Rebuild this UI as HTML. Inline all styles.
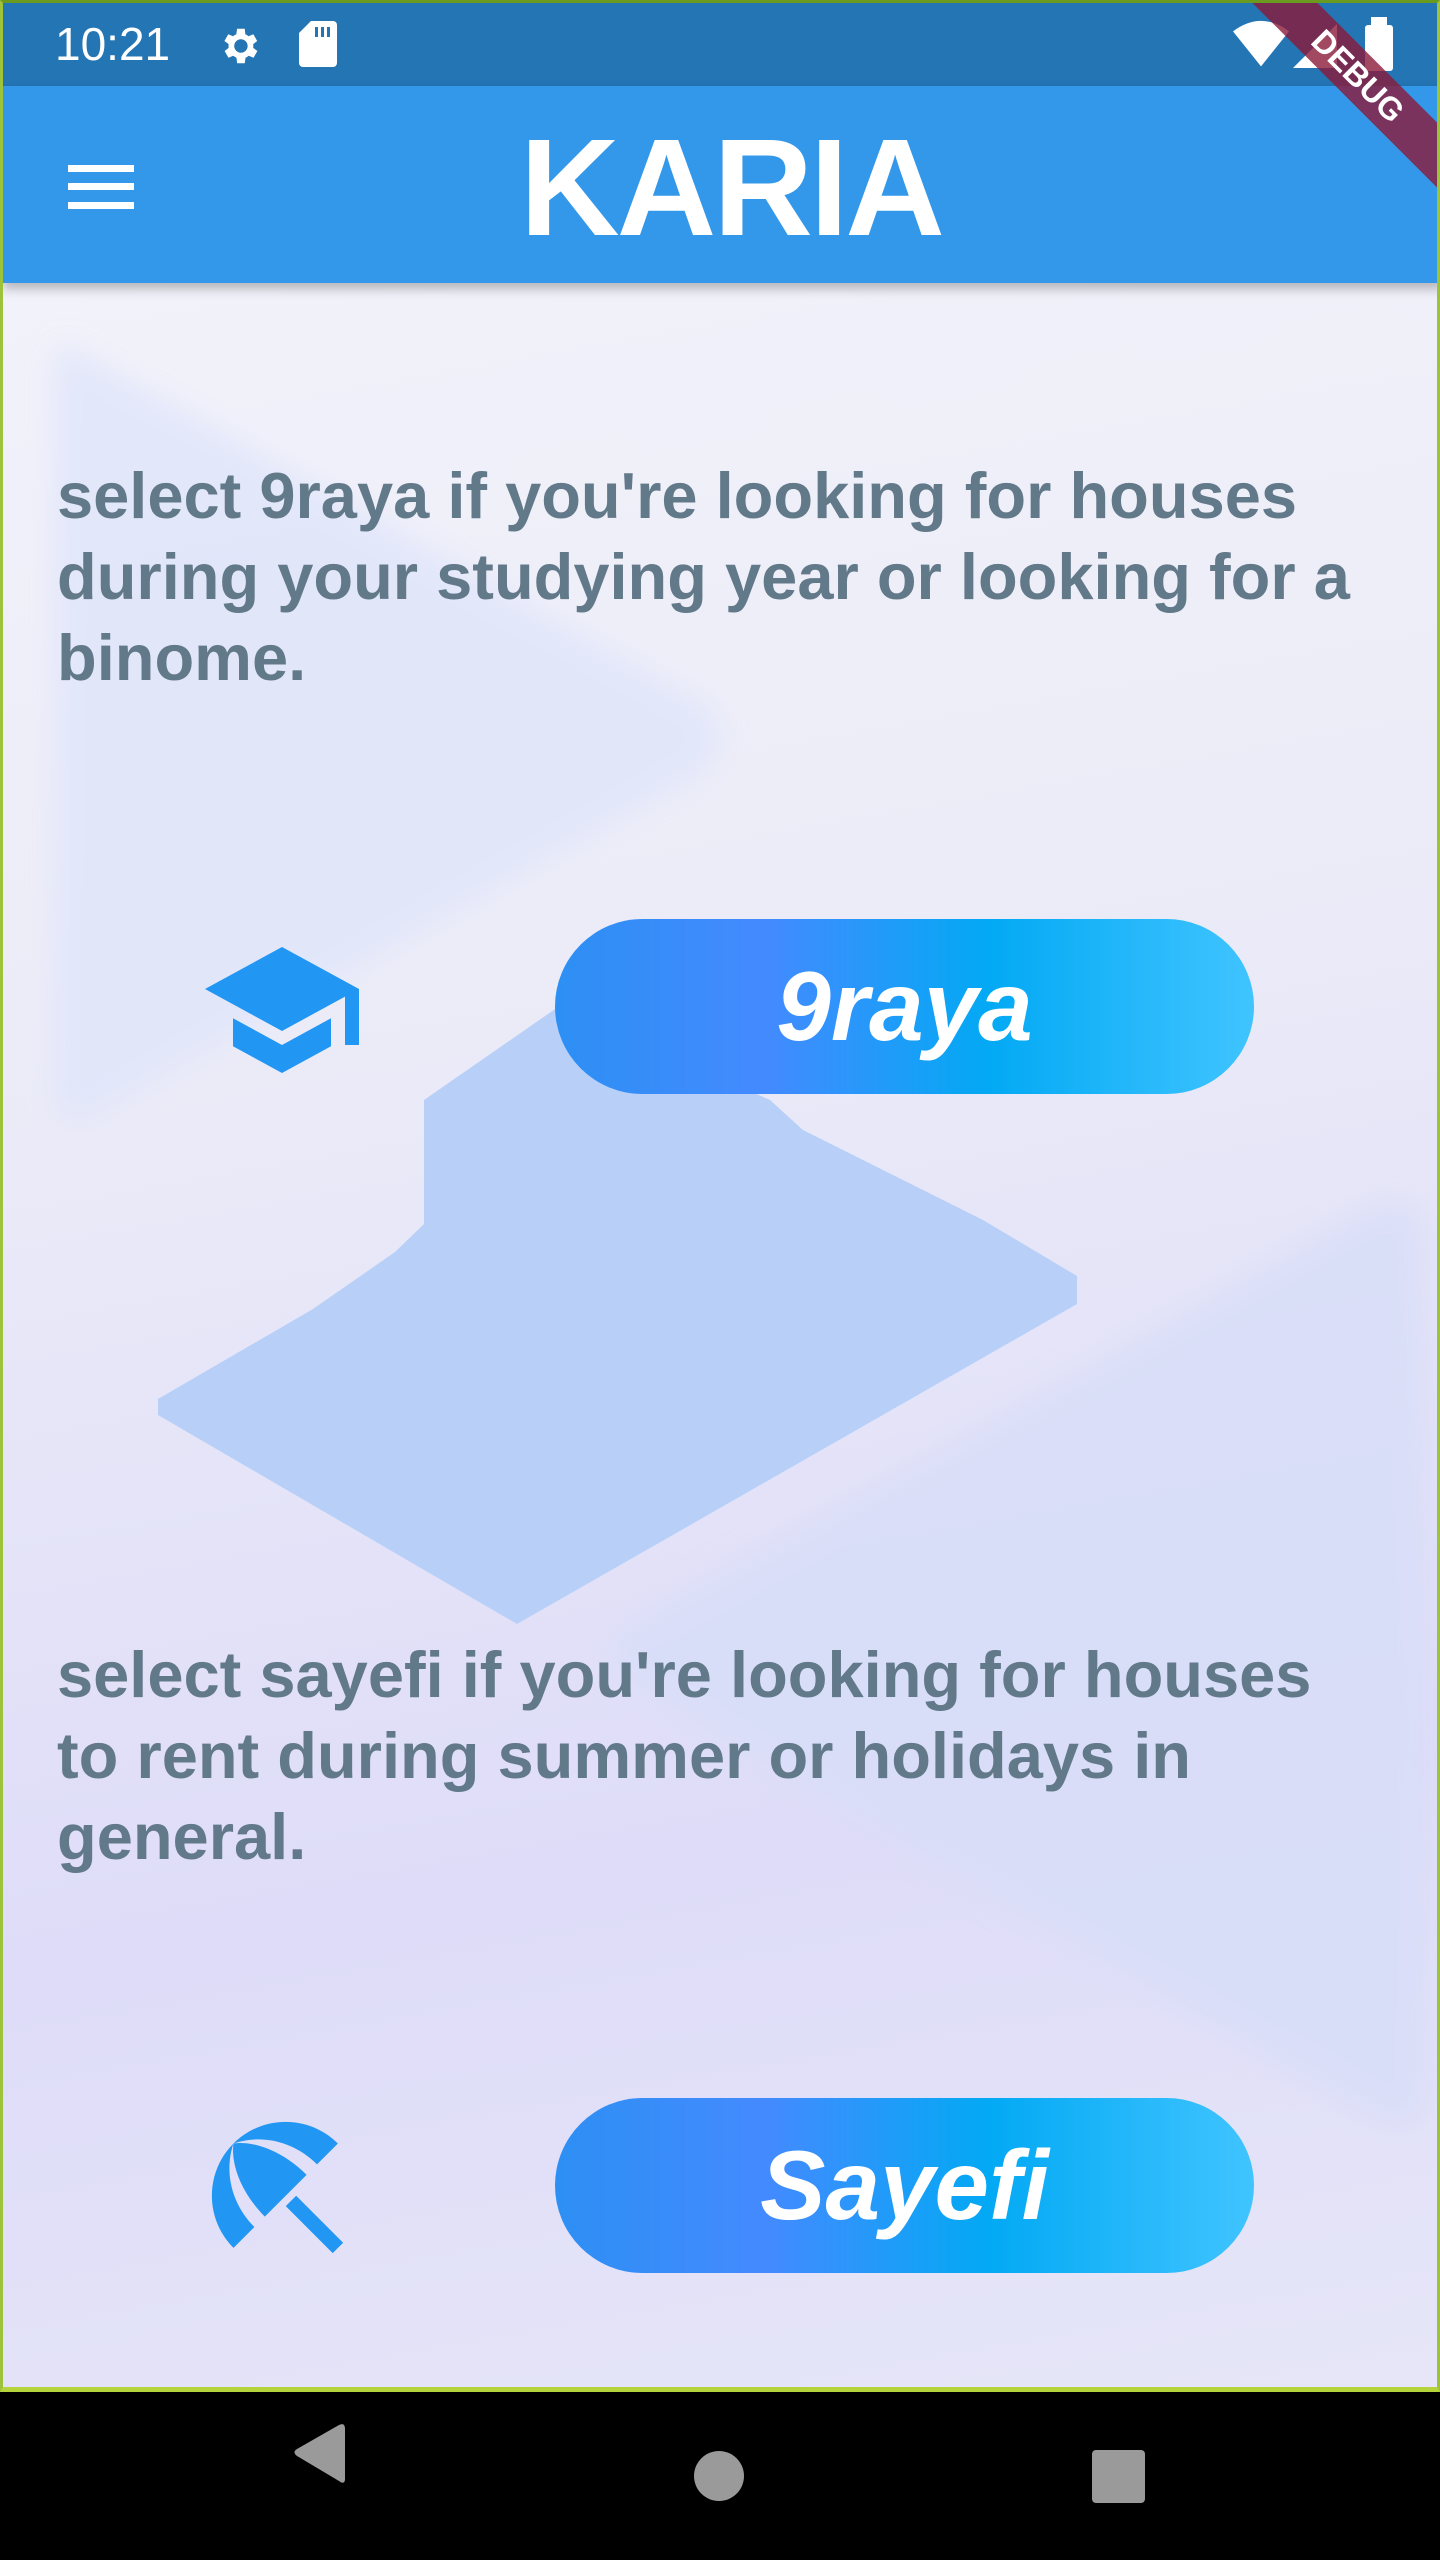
<!DOCTYPE html>
<html><head><meta charset="utf-8"><style>
*{margin:0;padding:0;box-sizing:border-box}
body{width:1440px;height:2560px;overflow:hidden;position:relative;font-family:"Liberation Sans",sans-serif;background:#000}
#frame{position:absolute;left:0;top:0;width:1440px;height:2392px;background:linear-gradient(170deg,#f4f4fb 0%,#ececf8 40%,#dedcf8 75%,#e6e6f8 100%);border:3px solid #9cc33a;border-bottom:5px solid #b5d33a;border-top:3px solid #6a9a20;overflow:hidden}
#status{position:absolute;left:0;top:0;width:1440px;height:83px;background:#2475b4}
#appbar{position:absolute;left:0;top:83px;width:1440px;height:197px;background:#3398ea;box-shadow:0 6px 10px rgba(0,0,0,.25)}
.t{position:absolute;left:54px;color:#62798a;font-weight:bold;font-size:65px;line-height:81px;width:1380px;white-space:nowrap}
.btn{position:absolute;left:552px;width:699px;height:175px;border-radius:88px;background:linear-gradient(90deg,#2d8ff3 0%,#448aff 30%,#03a9f4 62%,#40c4ff 100%);color:#fff;font-weight:bold;font-style:italic;font-size:98px;text-align:center;line-height:175px}
</style></head><body>
<div id="frame">
<svg style="position:absolute;left:0;top:0" width="1440" height="2392">
<defs><filter id="b"><feGaussianBlur stdDeviation="14"/></filter></defs>
<path d="M70 345 L700 700 Q735 735 700 770 L85 1115 Q50 1125 50 1090 L50 370 Q50 335 70 345Z" fill="#dfe5fa" opacity=".8" filter="url(#b)"/>
<path d="M620 1625 L1365 1205 Q1420 1185 1422 1240 L1425 2090 Q1420 2140 1370 2115 L625 1680 Q595 1650 620 1625Z" fill="#d8def8" opacity=".8" filter="url(#b)"/>
<polygon points="421,1097 555,1004 767,1097 800,1127 980,1217 1074,1273 1074,1301 514,1621 155,1412 155,1396 310,1306 392,1249 421,1221" fill="#b8d0f8"/>
</svg>
<div id="status">
<div style="position:absolute;left:52px;top:14px;color:#fff;font-size:46px">10:21</div>
<svg style="position:absolute;left:213px;top:20px" width="46" height="46" viewBox="0 0 24 24"><path fill="#fff" d="M19.4 13a7.5 7.5 0 0 0 0-2l2.1-1.6-2-3.5-2.5 1a7 7 0 0 0-1.7-1L15 3h-4l-.4 2.9a7 7 0 0 0-1.7 1l-2.5-1-2 3.5L6.6 11a7.5 7.5 0 0 0 0 2l-2.1 1.6 2 3.5 2.5-1a7 7 0 0 0 1.7 1L11 21h4l.4-2.9a7 7 0 0 0 1.7-1l2.5 1 2-3.5zM13 15.5A3.5 3.5 0 1 1 13 8.5a3.5 3.5 0 0 1 0 7z"/></svg>
<svg style="position:absolute;left:296px;top:18px" width="38" height="46" viewBox="0 0 19 23"><path fill="#fff" d="M6 0h11a2 2 0 0 1 2 2v19a2 2 0 0 1-2 2H2a2 2 0 0 1-2-2V6z"/><path fill="#2475b4" d="M8 3h1.5v5H8zM11 3h1.5v5H11zM14 3h1.5v5H14z"/></svg>
<svg style="position:absolute;left:1230px;top:16px" width="56" height="48" viewBox="0 0 24 20"><path fill="#fff" d="M12 20L0 5Q12-4 24 5z"/></svg>
<svg style="position:absolute;left:1290px;top:20px" width="44" height="46" viewBox="0 0 22 22"><path fill="#fff" d="M22 0v22H0z"/></svg>
<div style="position:absolute;left:1362px;top:22px;width:28px;height:46px;background:#fff;border-radius:3px"></div>
<div style="position:absolute;left:1368px;top:14px;width:16px;height:10px;background:#fff"></div>
</div>
<div id="appbar">
<div style="position:absolute;left:65px;top:79px;width:66px;height:7px;background:#fff"></div>
<div style="position:absolute;left:65px;top:97px;width:66px;height:7px;background:#fff"></div>
<div style="position:absolute;left:65px;top:116px;width:66px;height:7px;background:#fff"></div>
<div style="position:absolute;left:0;width:1440px;top:22px;text-align:center;color:#fff;font-weight:bold;font-size:138px;line-height:160px;padding-left:16px;letter-spacing:-3px">KARIA</div>
</div>
<div style="position:absolute;left:1195px;top:50px;width:320px;height:46px;background:rgba(139,26,58,.8);transform:rotate(45deg);color:#fff;font-weight:bold;font-size:32px;text-align:center;line-height:46px">DEBUG</div>
<div class="t" style="top:452px">select 9raya if you're looking for houses<br>during your studying year or looking for a<br>binome.</div>
<div class="t" style="top:1631px">select sayefi if you're looking for houses<br>to rent during summer or holidays in<br>general.</div>
<svg style="position:absolute;left:195px;top:923px" width="168" height="168" viewBox="0 0 24 24"><path fill="#2196f3" d="M5 13.18v4L12 21l7-3.82v-4L12 17l-7-3.82zM12 3L1 9l11 6 9-4.91V17h2V9L12 3z"/></svg>
<svg style="position:absolute;left:187px;top:2097px" width="175" height="175" viewBox="0 0 24 24"><path fill="#2196f3" d="M13.13 14.56l1.43-1.43 6.44 6.44L19.57 21zm4.29-5.73l2.86-2.86c-3.95-3.95-10.35-3.96-14.3-.02 3.93-1.3 8.31-.25 11.44 2.88zM5.95 5.98c-3.94 3.95-3.93 10.35.02 14.3l2.86-2.86C5.7 14.290 4.65 9.91 5.95 5.98zm.02-.02l-.01.01c-.38 3.01 1.17 6.88 4.3 10.02l5.73-5.730c-3.130-3.13-7.01-4.68-10.02-4.3z"/></svg>
<div class="btn" style="top:916px">9raya</div>
<div class="btn" style="top:2095px">Sayefi</div>
</div>
<svg style="position:absolute;left:0;top:2392px" width="1440" height="168">
<path d="M345 37 L345 88 Q344 93 339 89 L297 64 Q292 60 297 57 L339 33 Q345 30 345 37Z" fill="#9a9a9a"/>
<circle cx="719" cy="84" r="25" fill="#9a9a9a"/>
<rect x="1092" y="58" width="53" height="53" rx="4" fill="#9a9a9a"/>
</svg>
</body></html>
